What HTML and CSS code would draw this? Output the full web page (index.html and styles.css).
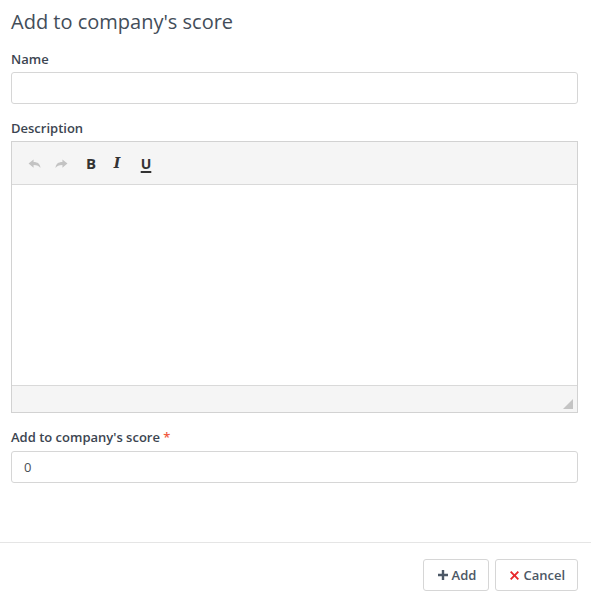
FILE: index.html
```html
<!DOCTYPE html>
<html>
<head>
<meta charset="utf-8">
<link rel="stylesheet" href="styles.css">
</head>
<body>
<div class="modal">
  <div class="modal-body">
    <h1 class="title">Add to company's score</h1>
    <div class="group">
      <label class="label">Name</label>
      <div class="input"></div>
    </div>
    <div class="group">
      <label class="label">Description</label>
      <div class="editor">
        <div class="toolbar">
          <span class="tool undo">
            <svg width="13" height="11" viewBox="0 0 14 12"><path d="M0.5 6 L6 1.5 V4.3 C10.5 4.3 13.5 6.5 13.5 11 C12 8.5 10 7.6 6 7.6 V10.5 Z" fill="#c3c3c3"/></svg>
          </span>
          <span class="tool redo">
            <svg width="13" height="11" viewBox="0 0 14 12"><path d="M13.5 6 L8 1.5 V4.3 C3.5 4.3 0.5 6.5 0.5 11 C2 8.5 4 7.6 8 7.6 V10.5 Z" fill="#c3c3c3"/></svg>
          </span>
          <span class="tool bold">B</span>
          <span class="tool italic">I</span>
          <span class="tool under">U</span>
        </div>
        <div class="editor-body"></div>
        <div class="statusbar">
          <span class="resize"></span>
        </div>
      </div>
    </div>
    <div class="group group-score">
      <label class="label label-score">Add to company's score <span class="req">*</span></label>
      <div class="input value">0</div>
    </div>
  </div>
  <div class="modal-footer">
    <button class="btn">
      <svg width="10" height="10" viewBox="0 0 10 10"><path d="M3.8 0 H6.2 V3.8 H10 V6.2 H6.2 V10 H3.8 V6.2 H0 V3.8 H3.8 Z" fill="#4c5866"/></svg>
      Add
    </button>
    <button class="btn">
      <svg width="9" height="9" viewBox="0 0 10 10"><path d="M1.5 0 L5 3.5 L8.5 0 L10 1.5 L6.5 5 L10 8.5 L8.5 10 L5 6.5 L1.5 10 L0 8.5 L3.5 5 L0 1.5 Z" fill="#e8282b"/></svg>
      Cancel
    </button>
  </div>
</div>
</body>
</html>
```

FILE: styles.css
```css
* { box-sizing: border-box; }
html, body {
  margin: 0;
  padding: 0;
  background: #fff;
  font-family: "Open Sans", "Liberation Sans", sans-serif;
  color: #3c4551;
}
.modal {
  width: 591px;
  height: 604px;
  display: flex;
  flex-direction: column;
}
.modal-body {
  padding: 11px 13px 0 11px;
  height: 542px;
}
.title {
  margin: 0 0 18px 0;
  font-size: 20px;
  line-height: 22px;
  font-weight: 400;
  color: #434d59;
}
.group {
  margin-bottom: 16px;
}
.group-score {
  margin-top: 1px;
}
.label {
  display: block;
  font-size: 13px;
  line-height: 17px;
  font-weight: 600;
  color: #3c4551;
  margin-bottom: 4px;
}
.label-score {
  margin-bottom: 5px;
}
.req { color: #f05b3f; }
.input {
  height: 32px;
  border: 1px solid #d6d6d6;
  border-radius: 3px;
  padding: 0 12px;
  font-size: 13px;
  line-height: 30px;
  color: #555;
}
.value { color: #4a4f55; }
.editor {
  border: 1px solid #d2d2d2;
  height: 272px;
  display: flex;
  flex-direction: column;
}
.toolbar {
  height: 43px;
  background: #f5f5f5;
  border-bottom: 1px solid #d9d9d9;
  display: flex;
  align-items: center;
  padding-left: 16px;
}
.tool {
  display: flex;
  align-items: center;
  justify-content: center;
  height: 18px;
  color: #333;
}
.tool.undo { width: 13px; margin-right: 14px; }
.tool.redo { width: 13px; margin-right: 18px; }
.tool.bold {
  font-weight: 700;
  font-size: 15px;
  width: 10px;
  margin-right: 16px;
}
.tool.italic {
  font-family: "DejaVu Serif", serif;
  font-weight: 700;
  font-style: italic;
  font-size: 14px;
  width: 10px;
  margin-right: 19px;
}
.tool.under {
  font-weight: 700;
  font-size: 14px;
  width: 10px;
  text-decoration: underline;
  text-decoration-thickness: 1.5px;
  text-underline-offset: 2px;
}
.editor-body {
  flex: 1;
  background: #fff;
}
.statusbar {
  height: 27px;
  background: #f5f5f5;
  border-top: 1px solid #d9d9d9;
  position: relative;
}
.resize {
  position: absolute;
  right: 4px;
  bottom: 3px;
  width: 0;
  height: 0;
  border-left: 10px solid transparent;
  border-bottom: 10px solid #c4c4c4;
}
.modal-footer {
  border-top: 1px solid #e5e5e5;
  padding: 16px 13px 0 0;
  display: flex;
  justify-content: flex-end;
  gap: 6px;
}
.btn {
  height: 32px;
  background: #fff;
  border: 1px solid #d6d6d6;
  border-radius: 3px;
  font-family: "Open Sans", sans-serif;
  font-size: 13px;
  font-weight: 600;
  color: #4c5866;
  display: flex;
  align-items: center;
  gap: 4px;
  padding: 0 12px 0 14px;
  cursor: pointer;
}
```
